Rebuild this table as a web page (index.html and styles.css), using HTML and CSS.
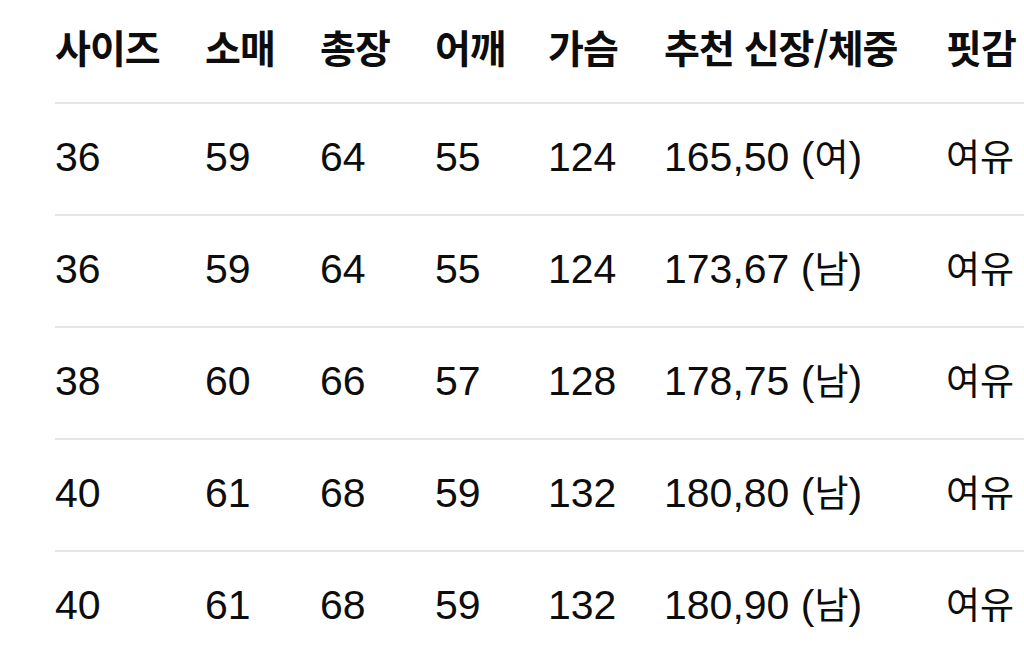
FILE: index.html
```html
<!DOCTYPE html>
<html lang="ko">
<head>
<meta charset="utf-8">
<link rel="stylesheet" href="styles.css">
</head>
<body>
<div class="table">
  <div class="row head">
    <div class="cell">사이즈</div><div class="cell">소매</div><div class="cell">총장</div><div class="cell">어깨</div><div class="cell">가슴</div><div class="cell">추천 신장/체중</div><div class="cell">핏감</div>
  </div>
  <div class="row">
    <div class="cell">36</div><div class="cell">59</div><div class="cell">64</div><div class="cell">55</div><div class="cell">124</div><div class="cell">165,50 (<span class="ko">여</span>)</div><div class="cell"><span class="ko">여유</span></div>
  </div>
  <div class="row">
    <div class="cell">36</div><div class="cell">59</div><div class="cell">64</div><div class="cell">55</div><div class="cell">124</div><div class="cell">173,67 (<span class="ko">남</span>)</div><div class="cell"><span class="ko">여유</span></div>
  </div>
  <div class="row">
    <div class="cell">38</div><div class="cell">60</div><div class="cell">66</div><div class="cell">57</div><div class="cell">128</div><div class="cell">178,75 (<span class="ko">남</span>)</div><div class="cell"><span class="ko">여유</span></div>
  </div>
  <div class="row">
    <div class="cell">40</div><div class="cell">61</div><div class="cell">68</div><div class="cell">59</div><div class="cell">132</div><div class="cell">180,80 (<span class="ko">남</span>)</div><div class="cell"><span class="ko">여유</span></div>
  </div>
  <div class="row last">
    <div class="cell">40</div><div class="cell">61</div><div class="cell">68</div><div class="cell">59</div><div class="cell">132</div><div class="cell">180,90 (<span class="ko">남</span>)</div><div class="cell"><span class="ko">여유</span></div>
  </div>
</div>
</body>
</html>
```
FILE: styles.css
```css
html, body {
  margin: 0;
  padding: 0;
  background: #ffffff;
  overflow: hidden;
}
body {
  width: 1024px;
  height: 654px;
  font-family: "Liberation Sans", "Noto Sans CJK KR", sans-serif;
  color: #0d0d0d;
}
.table {
  margin-top: -8px;
  padding-left: 55px;
  display: flex;
  flex-direction: column;
}
.row {
  display: grid;
  grid-template-columns: 150px 115px 115px 113px 116px 282px minmax(0, 1fr);
  height: 110px;
  align-items: center;
  border-bottom: 2px solid #e6e6e6;
  font-size: 41px;
  white-space: nowrap;
}
.row.last {
  border-bottom: none;
}
.cell {
  line-height: 1;
  padding-bottom: 4px;
}
.ko {
  font-family: "Noto Sans CJK KR", sans-serif;
  font-size: 37px;
}
.head {
  font-family: "Noto Sans CJK KR", sans-serif;
  font-weight: 700;
  font-size: 39px;
  letter-spacing: -1px;
}
.head .cell {
  padding-bottom: 2px;
}
```
